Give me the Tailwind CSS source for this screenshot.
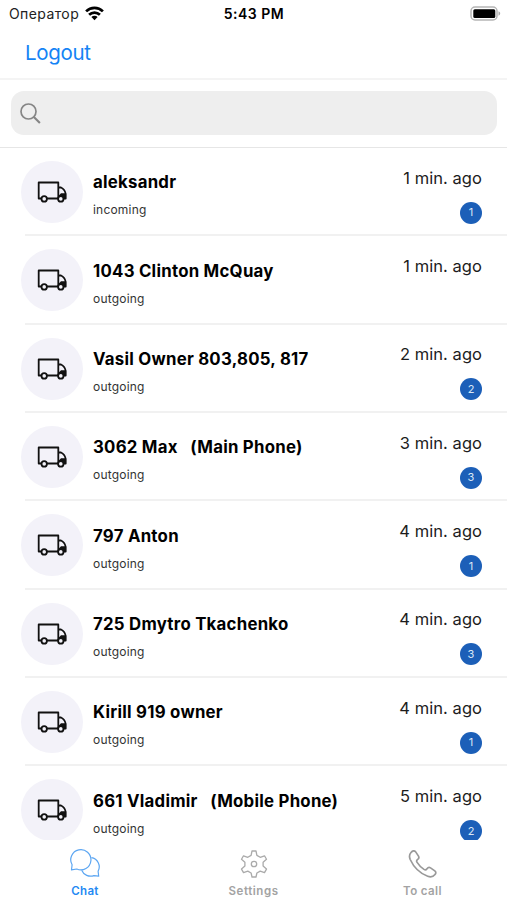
<!DOCTYPE html>
<html lang="en">
<head>
    <meta charset="UTF-8">
    <meta name="viewport" content="width=device-width, initial-scale=1.0">
    <title>Chat</title>
    <script src="https://cdn.jsdelivr.net/npm/@tailwindcss/browser@4"></script>
</head>
<body class="bg-white font-['Inter','Liberation_Sans',sans-serif] text-black">

    <div class="flex flex-col w-[507px] h-[900px] overflow-hidden">
        <!-- Status bar -->
        <div class="grid grid-cols-3 items-center h-[27px] shrink-0 pl-[9px] pr-[6px] text-[14px]">
            <div class="flex items-center gap-[6px] text-[#222]">
                <span class="tracking-[0.4px]">Оператор</span>
                <svg class="w-[19px] h-[15px] -mt-[1px]" viewBox="0 0 19 15" fill="none" stroke="#000" stroke-width="2.7">
                    <path d="M1.1 5.4a12 12 0 0 1 16.8 0M4.1 8.8a7.7 7.7 0 0 1 10.8 0"/>
                    <path d="M9.5 14.2L6.4 11.1a4.4 4.4 0 0 1 6.2 0z" fill="#000" stroke="none"/>
                </svg>
            </div>
            <span class="text-center font-semibold tracking-[0.5px] -ml-[2px]">5:43 PM</span>
            <svg class="justify-self-end w-[31px] h-[15px]" viewBox="0 0 31 15">
                <rect x="1" y="1" width="26" height="13" rx="4" fill="#fff" stroke="#b5b5b5" stroke-width="1.5"/>
                <rect x="3.3" y="3.2" width="22" height="8.8" rx="1.5" fill="#000"/>
                <path d="M28.5 5.3v4.4c2.3-.8 2.3-3.6 0-4.4z" fill="#aaa"/>
            </svg>
        </div>

        <!-- Header -->
        <div class="flex items-center h-[53px] shrink-0 pl-[25px] pt-[2px] border-b-2 border-[#f4f4f4]">
            <a class="text-[20.5px] tracking-[-0.3px] text-[#1483f5]">Logout</a>
        </div>

        <!-- Search -->
        <div class="h-[68px] shrink-0 pl-[11px] pr-[10px] pt-[11px] border-b border-[#e6e6e6]">
            <div class="flex items-center h-[44px] pl-[9px] rounded-[13px] bg-[#eee]">
                <svg class="w-[21px] h-[21px]" viewBox="0 0 21 21" fill="none" stroke="#858585" stroke-width="1.7">
                    <circle cx="8.5" cy="8.5" r="7.5"/>
                    <path d="M13.9 13.9l6 6" stroke-width="2.1"/>
                </svg>
            </div>
        </div>

        <div id="chats" class="flex-1 overflow-hidden"></div>

        <!-- Tabs -->
        <div class="grid grid-cols-3 h-[60px] shrink-0 bg-white text-[11.5px] font-semibold text-[#a3a3a3]">
            <div class="flex flex-col items-center pt-[9px] pl-[1px] text-[#2389f3]">
                <svg class="w-[30px] h-[30px]" viewBox="0 0 30 30" fill="none" stroke="#5ca6f2" stroke-width="1.2" stroke-linejoin="round">
                    <path d="M1.5 20.8l.6-5A10.100 10.100 0 1 1 6.800 20z"/>
                    <path d="M21.4 8.700a9.200 9.200 0 0 1 6.700 13.500l.6 5-4.800-.6a9.600 9.600 0 0 1-12.200-5.400"/>
                </svg>
                <span class="mt-[5px] leading-[14px] tracking-[0.3px]">Chat</span>
            </div>
            <div class="flex flex-col items-center pt-[9px]">
                <svg class="w-[30px] h-[30px]" viewBox="0 0 30 30" fill="none" stroke="#aaa" stroke-width="1.3" stroke-linejoin="round">
                    <path d="M13 2h4l.9 4.400 3.300 1.900 4.300-1.500 2 3.500-3.400 3v3.800l3.400 3-2 3.500-4.300-1.500-3.300 1.900L17 28h-4l-.9-4-3.300-1.900-4.300 1.500-2-3.500 3.400-3v-3.800l-3.400-3 2-3.500 4.300 1.500 3.300-1.900z"/>
                    <circle cx="15" cy="15" r="2.700"/>
                </svg>
                <span class="mt-[5px] leading-[14px] tracking-[0.550px]">Settings</span>
            </div>
            <div class="flex flex-col items-center pt-[9px]">
                <svg class="w-[30px] h-[30px]" viewBox="0 0 30 30" fill="none" stroke="#999" stroke-width="1.7" stroke-linejoin="round">
                    <path d="M3 3.500C4.600 1.800 6.200 1.300 7.500 2.600l3 4.500c.8 1.400.4 2.400-.8 3.300-1.400 1-1.400 1.800-.6 3 1.800 2.900 3.900 5 6.900 7 1.300.8 2.100.6 3-.7 1-1.300 2.200-1.600 3.500-.8l4.300 3c1.300 1 1.300 2.200.2 3.600-1.800 2.300-4.300 2.900-7.300 1.800C11.800 24.300 5.800 18.300 2.200 10.500 1 7.600 1.300 5.400 3 3.500z"/>
                </svg>
                <span class="mt-[5px] leading-[14px] tracking-[0.4px]">To call</span>
            </div>
        </div>
    </div>

    <template id="row">
        <div class="flex h-[88.35px] pl-[21px]">
            <div class="flex items-center justify-center w-[62px] h-[62px] mt-[13px] rounded-full bg-[#f3f2f9] shrink-0">
                <svg class="w-[30px] h-[22px]" viewBox="0 0 30 22" fill="none" stroke="#111" stroke-width="1.8" stroke-linejoin="round">
                    <path d="M4.500 17.500H1.700V1.500h19.600v16M9.500 17.500h12M21.300 6.500h2.700c2.300 1 4.200 3.700 4.700 6.500v4.500h-2"/>
                    <path d="M24 12.200h5v5h-2.200c-.3-1.500-1.300-2.300-3-2.300h-2.500z" fill="#111" stroke="none"/>
                    <circle cx="7.200" cy="17.900" r="2.700" fill="#f3f2f9"/>
                    <circle cx="23.800" cy="17.900" r="2.700" fill="#f3f2f9"/>
                </svg>
            </div>
            <div class="flex flex-1 ml-[10px] pr-[25px] justify-between">
                <div class="pt-[22.300px]">
                    <div class="name text-[16.8px] leading-[24px] font-bold tracking-[0.25px] whitespace-pre"></div>
                    <div class="type text-[12px] leading-[16px] mt-[8px] tracking-[0.2px] text-[#333]"></div>
                </div>
                <div class="flex flex-col items-end pt-[17.500px]">
                    <div class="time text-[16.5px] leading-[24px] tracking-[0.05px] text-[#1c1c1c]"></div>
                    <div class="count flex items-center justify-center w-[22px] h-[22px] mt-[12px] rounded-full bg-[#1c5fb8] text-[11px] text-[#dbe7f6]"></div>
                </div>
            </div>
        </div>
        <div class="h-[2px] -mt-[2px] ml-[25px] bg-[#f1f1f1]"></div>
    </template>

    <script>
        const chats = [
            ["aleksandr", "incoming", "1 min. ago", 1],
            ["1043 Clinton McQuay", "outgoing", "1 min. ago", 0],
            ["Vasil Owner 803,805, 817", "outgoing", "2 min. ago", 2],
            ["3062 Max   (Main Phone)", "outgoing", "3 min. ago", 3],
            ["797 Anton", "outgoing", "4 min. ago", 1],
            ["725 Dmytro Tkachenko", "outgoing", "4 min. ago", 3],
            ["Kirill 919 owner", "outgoing", "4 min. ago", 1],
            ["661 Vladimir   (Mobile Phone)", "outgoing", "5 min. ago", 2]
        ];

        const list = document.getElementById("chats");
        const template = document.getElementById("row");

        chats.forEach(([name, type, time, count]) => {
            const row = template.content.cloneNode(true);
            row.querySelector(".name").textContent = name;
            row.querySelector(".type").textContent = type;
            row.querySelector(".time").textContent = time;
            if (count) row.querySelector(".count").textContent = count;
            else row.querySelector(".count").remove();
            list.appendChild(row);
        });
    </script>

</body>
</html>
